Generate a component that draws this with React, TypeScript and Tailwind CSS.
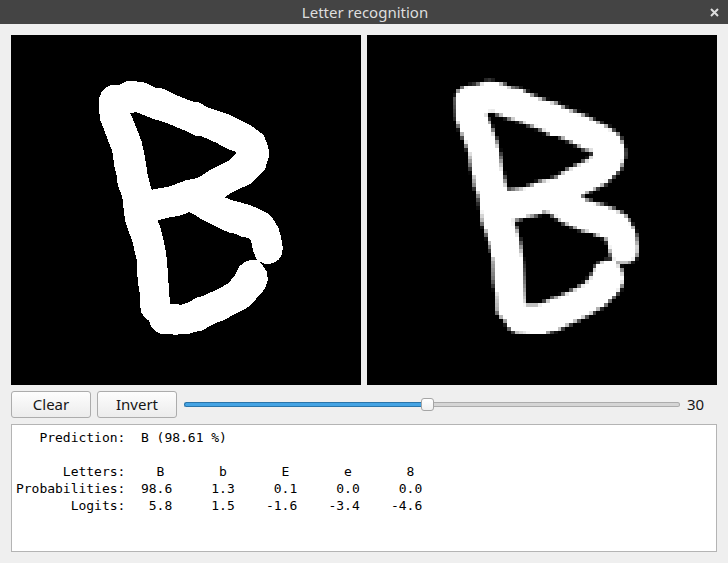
import { useEffect, useRef } from 'react';

const STROKE =
  'M125 34L140 33L172 36L190 42L210 53L235 56L270 74L320 94L340 97L375 115L430 133L500 168L535 194L547 222L551 240L551 262L540 298L525 312L495 342L460 358L435 370L420 382L440 390L490 404L515 413L545 428L560 440L580 473L588 500L593 530L592 550L582 568L570 577L557 581L537 581L520 573L530 581L545 605L549 630L543 648L535 662L515 685L492 710L445 735L415 751L390 760L350 782L330 786L310 792L270 794L225 791L207 780L198 768L192 752L180 744L167 725L165 675L160 645L158 630L155 570L143 518L120 452L113 390L108 370L98 345L96 320L88 290L82 245L65 200L44 145L42 85L50 65L60 54L75 46L105 44Z' +
  'M136 130L152 126L165 131L205 147L240 157L300 182L330 197L348 198L395 219L430 238L447 243L455 250L435 270L375 300L345 320L325 327L305 330L255 349L235 353L200 359L196 345L187 310L183 280L177 248L170 215L155 175Z' +
  'M218 451L250 443L280 438L300 432L313 426L330 435L355 451L385 466L430 487L450 491L470 500L490 504L497 510L500 522L505 545L516 571L500 569L480 575L462 590L448 618L430 640L400 657L350 679L335 683L310 697L290 704L255 702L252 660L246 570L240 530L228 478Z';

function Drawing() {
  return (
    <svg className="size-[350px] bg-black" viewBox="-222 -105 1050 1050" shapeRendering="crispEdges">
      <path d={STROKE} fill="white" fillRule="evenodd" />
    </svg>
  );
}

const GRID = 90;

function SampledDrawing() {
  const ref = useRef<HTMLCanvasElement>(null);
  useEffect(() => {
    const ctx = ref.current?.getContext('2d');
    if (!ctx) return;
    const scale = GRID / 1050;
    ctx.setTransform(1, 0, 0, 1, 0, 0);
    ctx.fillStyle = '#000';
    ctx.fillRect(0, 0, GRID, GRID);
    ctx.setTransform(scale, 0, 0, scale, 222 * scale, 105 * scale);
    ctx.fillStyle = '#fff';
    ctx.fill(new Path2D(STROKE), 'evenodd');
  }, []);
  return <canvas ref={ref} width={GRID} height={GRID} className="size-[350px] bg-black [image-rendering:pixelated]" />;
}

function Button({ label }: { label: string }) {
  return (
    <button className="h-[27px] w-20 rounded-[3px] border border-[#acacac] bg-linear-to-b from-[#fdfdfd] to-[#ececec] text-[15px] leading-[25px] text-[#161616]">
      {label}
    </button>
  );
}

const OUTPUT = [
  '   Prediction:  B (98.61 %)',
  '',
  '      Letters:    B       b       E       e       8',
  'Probabilities:  98.6     1.3     0.1     0.0     0.0',
  '       Logits:   5.8     1.5    -1.6    -3.4    -4.6',
].join('\n');

export default function App() {
  return (
    <div className="flex h-[563px] w-[728px] flex-col bg-[#efefef] [font-family:'Noto_Sans','Open_Sans',sans-serif]">
      <header className="flex h-6 shrink-0 items-center bg-[#444444] text-[#dedede]">
        <h1 className="flex-1 pl-5 text-center text-[15px] leading-6">Letter recognition</h1>
        <svg className="mr-[9px] h-[9px] w-[9px]" viewBox="0 0 9 9" fill="none" stroke="currentColor" strokeWidth="2">
          <path d="M1 1L8 8M8 1L1 8" />
        </svg>
      </header>
      <main className="flex flex-1 flex-col px-[11px] pt-[11px] pb-[11px]">
        <div className="flex gap-1.5">
          <Drawing />
          <SampledDrawing />
        </div>
        <div className="mt-1.5 flex h-[27px] items-center">
          <Button label="Clear" />
          <div className="w-1.5" />
          <Button label="Invert" />
          <div className="ml-[7px] flex w-[496px] items-center">
            <div className="h-[5px] w-[237px] rounded-l-sm border border-r-0 border-[#2a75aa] bg-[#45a3e3]" />
            <div className="size-[13px] rounded-[3px] border border-[#a5a5a5] bg-linear-to-b from-white to-[#f0f0f0]" />
            <div className="h-[5px] flex-1 rounded-r-sm border border-l-0 border-[#acacac] bg-[#d5d5d5]" />
          </div>
          <span className="ml-[7px] text-[15px] leading-[27px] text-[#161616]">30</span>
        </div>
        <pre className="mt-1.5 h-32 border border-[#b4b4b4] bg-white pt-[4px] pl-1 [font-family:'DejaVu_Sans_Mono',monospace] text-[13px] leading-[17px] tracking-[-0.015px] text-black">
          {OUTPUT}
        </pre>
      </main>
    </div>
  );
}
